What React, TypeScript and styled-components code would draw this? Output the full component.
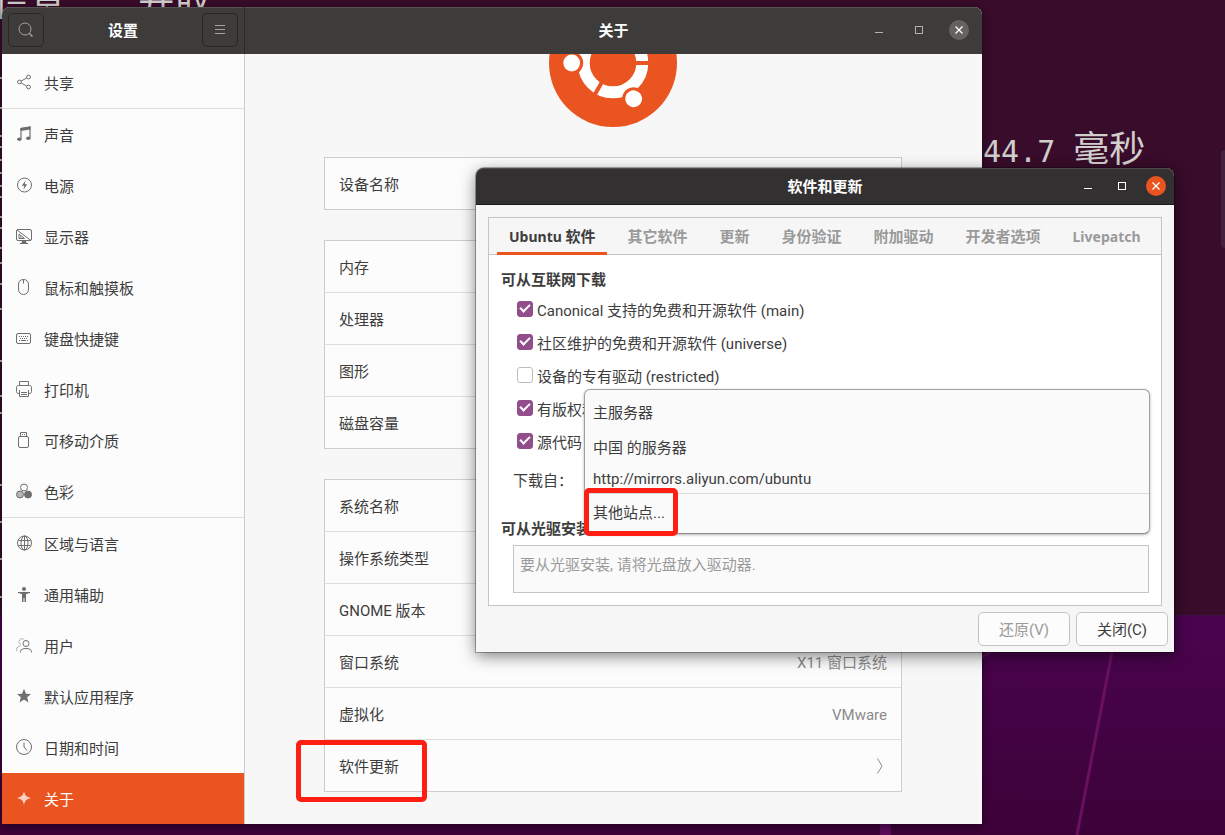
import React from "react";
import styled, { createGlobalStyle, css } from "styled-components";

const GlobalStyle = createGlobalStyle`
  * { box-sizing: border-box; }
  body {
    margin: 0;
    overflow: hidden;
    color: #3d3d3d;
    font: 15px/20px Roboto, "Noto Sans CJK SC", sans-serif;
  }
  button, input, select { font: inherit; color: inherit; }
  h1, h2, p, ul { margin: 0; padding: 0; font-size: inherit; }
`;

const Desktop = styled.main`
  position: relative;
  height: 100vh;
  overflow: hidden;
  background: linear-gradient(#4b0450 73%, #3c0238);
`;
const Rays = styled.svg`
  position: absolute;
  left: 0;
  bottom: 0;
  width: 100%;
  height: 221px;
`;
const Terminal = styled.section`
  position: absolute;
  inset: 0 0 220px;
  overflow: hidden;
  background: #380c2a;
  border-bottom: 1px solid #2b1622;
  color: #d0cfcc;
  font: 30px/36px "DejaVu Sans Mono", "Noto Sans CJK SC", monospace;
`;
const TerminalLine = styled.p<{ $top: number; $left: number }>`
  position: absolute;
  top: ${(p) => p.$top}px;
  left: ${(p) => p.$left}px;
  white-space: pre;
`;
const Wide = styled.span`
  font-size: 36px;
`;
const TerminalScroll = styled.div`
  position: absolute;
  right: 0;
  top: 150px;
  width: 4px;
  height: 98px;
  border-radius: 4px 0 0 4px;
  background: #45203a;
`;

const SettingsWindow = styled.section`
  position: absolute;
  left: 2px;
  right: 243px;
  top: 7px;
  bottom: 11px;
  display: flex;
  flex-direction: column;
  overflow: hidden;
  border-radius: 8px 8px 0 0;
  background: #f7f7f7;
  box-shadow: 0 2px 8px rgba(0, 0, 0, 0.5);
`;
const SettingsHeader = styled.header`
  display: flex;
  flex: none;
  height: 47px;
  background: #3d3c3a;
  box-shadow: inset 0 1px #55534f;
  color: #fff;
`;
const SidebarHeader = styled.div`
  display: flex;
  flex: none;
  align-items: center;
  justify-content: space-between;
  width: 243px;
  padding: 0 6px 1px;
  border-right: 1px solid #2b2a29;
`;
const HeaderButton = styled.button`
  display: grid;
  place-items: center;
  width: 36px;
  height: 34px;
  padding: 0;
  border: 1px solid #282726;
  border-radius: 5px;
  background: transparent;
  color: #a5a3a0;
`;
const PageHeader = styled.div`
  display: grid;
  flex: 1;
  grid-template-columns: 1fr auto 1fr;
  align-items: center;
  padding: 0 13px 1px;
`;
const WindowTitle = styled.h1`
  grid-column: 2;
  && { padding-top: 2px; }
  font-weight: 700;
`;
const WindowControls = styled.div<{ $gap: number }>`
  display: flex;
  justify-content: flex-end;
  gap: ${(p) => p.$gap}px;
`;
const ControlButton = styled.button<{ $fill?: string }>`
  display: grid;
  place-items: center;
  width: 20px;
  height: 20px;
  padding: 0;
  border: 0;
  border-radius: 50%;
  background: ${(p) => p.$fill ?? "transparent"};
`;
const SettingsBody = styled.div`
  display: flex;
  flex: 1;
  min-height: 0;
`;
const Sidebar = styled.nav`
  display: flex;
  flex: none;
  flex-direction: column;
  justify-content: flex-end;
  width: 243px;
  overflow: hidden;
  background: #fcfcfc;
  border-right: 1px solid #cdcdcd;
`;
const NavItem = styled.a<{ $active?: boolean; $divided?: boolean }>`
  display: flex;
  flex: none;
  align-items: center;
  gap: 12px;
  height: ${(p) => (p.$divided ? 52 : 51)}px;
  padding: 2px 14px 0;
  color: #3d3d3d;
  text-decoration: none;
  ${(p) => p.$divided && css`border-bottom: 1px solid #dedede;`}
  ${(p) => p.$active && css`background: #e95420; color: #fff;`}
`;
const NavIcon = styled.svg<{ $active?: boolean }>`
  flex: none;
  width: 16px;
  height: 16px;
  margin-bottom: 3px;
  color: ${(p) => (p.$active ? "#f9cfbf" : "#6e6e6e")};
  fill: none;
  stroke: currentColor;
`;
const Page = styled.div`
  display: flex;
  flex: 1;
  flex-direction: column;
  align-items: center;
  justify-content: flex-end;
  gap: 30px;
  padding: 0 80px 32px 79px;
  overflow: hidden;
`;
const Logo = styled.svg`
  flex: none;
  width: 128px;
  height: 128px;
`;
const Card = styled.ul`
  flex: none;
  width: 100%;
  list-style: none;
  background: #fcfcfc;
  border: 1px solid #cdcdcd;
`;
const CardRow = styled.li`
  display: flex;
  align-items: center;
  justify-content: space-between;
  height: 51px;
  padding: 2px 14px 0;
  & + & {
    height: 52px;
    border-top: 1px solid #dedede;
  }
`;
const CardValue = styled.span`
  color: #8b8b8b;
`;

const Dialog = styled.section`
  position: absolute;
  left: 476px;
  right: 51px;
  top: 168px;
  display: flex;
  flex-direction: column;
  border-radius: 8px 8px 0 0;
  background: #f6f6f6;
  box-shadow: 0 0 0 1px rgba(0, 0, 0, 0.3), 0 4px 16px rgba(0, 0, 0, 0.5);
`;
const DialogHeader = styled.header`
  display: grid;
  grid-template-columns: 1fr auto 1fr;
  align-items: center;
  height: 37px;
  padding: 0 8px;
  border-radius: 8px 8px 0 0;
  border-bottom: 1px solid #1d1c1c;
  background: #323030;
  box-shadow: inset 0 1px #4d4b4a;
  color: #fff;
`;
const Notebook = styled.div`
  margin: 12px 12px 6px;
  border: 1px solid #c4c4c4;
  background: #fff;
`;
const TabBar = styled.div`
  display: flex;
  gap: 8px;
  height: 37px;
  padding: 0 8px;
  border-bottom: 1px solid #c4c4c4;
  background: #f6f6f6;
`;
const Tab = styled.button<{ $active?: boolean }>`
  height: 37px;
  padding: 3px 12px 0;
  border: 0;
  border-bottom: 3px solid ${(p) => (p.$active ? "#e95420" : "transparent")};
  background: transparent;
  color: ${(p) => (p.$active ? "#3d3d3d" : "#9a9a9a")};
  font-weight: 700;
  white-space: nowrap;
`;
const TabLatin = styled.span`
  font-family: "Noto Sans", sans-serif;
  font-size: 14px;
`;
const TabPanel = styled.div`
  padding: 15px 12px 12px;
`;
const SectionTitle = styled.h2`
  font-weight: 700;
`;
const Sources = styled.div`
  display: flex;
  flex-direction: column;
  gap: 13px;
  padding: 10px 16px 0;
`;
const SourceRow = styled.label`
  display: flex;
  align-items: center;
  gap: 4px;
  height: 20px;
  padding-top: 2px;
  white-space: nowrap;
`;
const Tick = styled.input`
  flex: none;
  appearance: none;
  width: 16px;
  height: 16px;
  margin: 0 0 4px;
  border: 1px solid #bdbdbd;
  border-radius: 3px;
  background: #fff;
  &:checked {
    border-color: #924d8b;
    background: #924d8b;
  }
  &:checked::after {
    content: "";
    display: block;
    box-sizing: border-box;
    width: 10px;
    height: 6px;
    margin: 2px;
    border: solid #fff;
    border-width: 0 0 2px 2px;
    transform: rotate(-45deg);
  }
`;
const MirrorRow = styled.div`
  position: relative;
  display: flex;
  align-items: center;
  height: 34px;
  margin: 11px 0 22px 12px;
  padding-top: 2px;
`;
const MirrorMenu = styled.div`
  position: absolute;
  left: 71px;
  right: -1px;
  top: -74px;
  display: flex;
  flex-direction: column;
  padding: 5px 0 1px;
  border: 1px solid #a0a0a0;
  border-bottom-color: #8c8c8c;
  border-radius: 6px;
  background: #fafafa;
  box-shadow: 0 1px 3px rgba(0, 0, 0, 0.3);
`;
const MirrorOption = styled.button<{ $compact?: boolean; $separated?: boolean }>`
  height: ${(p) => (p.$compact ? 28 : 35)}px;
  padding: 0 8px;
  border: 0;
  background: transparent;
  text-align: left;
  ${(p) => p.$separated && css`height: 39px; border-top: 1px solid #dcdcdc;`}
`;
const DiscBox = styled.p`
  && {
    height: 48px;
    margin: 6px 0 0 12px;
    padding: 9px 6px;
  }
  border: 1px solid #c4c4c4;
  background: #fafafa;
  color: #9a9a9a;
`;
const DialogActions = styled.footer`
  display: flex;
  justify-content: flex-end;
  gap: 6px;
  padding: 0 6px 6px;
`;
const ActionButton = styled.button`
  width: 92px;
  height: 34px;
  padding: 2px 0 0;
  border: 1px solid #c4c4c4;
  border-radius: 5px;
  background: #fcfcfc;
  &:disabled { color: #9a9a9a; }
`;
const Highlight = styled.div<{ $x: number; $y: number; $w: number; $h: number }>`
  position: absolute;
  left: ${(p) => p.$x}px;
  top: ${(p) => p.$y}px;
  width: ${(p) => p.$w}px;
  height: ${(p) => p.$h}px;
  border: 5px solid #ff1e12;
  border-radius: 5px;
  pointer-events: none;
`;

const icons: Record<string, React.ReactNode> = {
  share: (
    <>
      <circle cx="3.5" cy="8" r="1.9" /><circle cx="12.5" cy="3" r="1.9" /><circle cx="12.5" cy="13" r="1.9" />
      <path d="M5.2 7l5.5-3M5.2 9l5.5 3" />
    </>
  ),
  music: (
    <>
      <path d="M5 13V2.6L14 1v11" strokeWidth="1.2" />
      <path d="M4.5 2L14.5 .6v3L4.5 5z" fill="currentColor" stroke="none" />
      <ellipse cx="3.3" cy="13.3" rx="2.2" ry="1.8" fill="currentColor" stroke="none" />
      <ellipse cx="12.3" cy="12.3" rx="2.2" ry="1.8" fill="currentColor" stroke="none" />
    </>
  ),
  power: (
    <>
      <circle cx="8.5" cy="8" r="7" />
      <path d="M9.5 3.5L5.8 8.8h2.4L7.5 12.5l3.7-5.3H8.8z" fill="currentColor" stroke="none" />
    </>
  ),
  display: (
    <>
      <rect x=".5" y="1.5" width="15" height="11" rx="1.5" />
      <path d="M1 2l14 10.5M3 6v4.5h5.5zM4.5 8.5v.7h1" />
      <path d="M6 13h4l.5 2H12v1H4v-1h1.5z" fill="currentColor" stroke="none" />
    </>
  ),
  mouse: <path d="M7.5 .5C4 .5 2.5 2.5 2.5 6v4c0 3.3 2 5.5 5 5.5s5-2.2 5-5.5V6c0-3.5-1.5-5.5-5-5.5zM7.5 .5v4" />,
  keyboard: (
    <>
      <rect x=".5" y="3.5" width="14" height="10" rx="1.5" />
      <path d="M3 6.5h10M4 8.5h8" strokeDasharray="1 1" /><path d="M3 10.5h1m1 0h5m1 0h1" />
    </>
  ),
  printer: (
    <>
      <path d="M3.5 4V.5h9V4M3 12.5C1.5 12.5 .5 12 .5 10.5v-4c0-1.3.8-2 2-2h11c1.2 0 2 .7 2 2v4c0 1.5-1 2-2.5 2" />
      <path d="M3.5 9v6.5h9V9M5 11.5h6M5 13.5h6" />
    </>
  ),
  usb: <path d="M4.5 4V.5h6V4M6 2.5h1m1 0h1M4 4.5h7q1.5 0 1.5 1.5v8q0 1.5-1.5 1.5H4q-1.5 0-1.5-1.5V6Q2.5 4.5 4 4.5z" />,
  color: (
    <>
      <circle cx="8" cy="4.5" r="3.5" />
      <circle cx="4" cy="11.5" r="3.5" fill="#b4b4b4" />
      <circle cx="12" cy="11.5" r="3.5" fill="currentColor" />
    </>
  ),
  globe: (
    <>
      <circle cx="8.5" cy="8" r="7" /><ellipse cx="8.5" cy="8" rx="3.5" ry="7" />
      <path d="M2.5 5.5h12M2.5 10.5h12M8.5 1v14" />
    </>
  ),
  access: (
    <>
      <circle cx="8" cy="3" r="2" fill="currentColor" stroke="none" />
      <path d="M2 6h12v1l-4 1v8H8.5v-4h-1v4H6V8L2 7z" fill="currentColor" stroke="none" />
    </>
  ),
  users: (
    <>
      <g opacity=".5"><path d="M5 7.5A3 3 0 1 1 8.5 3M.5 14v-1.5c0-2 1.5-3.5 4-3.5" /></g>
      <circle cx="10" cy="6.5" r="3" /><path d="M4.5 15.5v-.7c0-2.3 2-3.3 5.5-3.3s5.5 1 5.5 3.3v.7" />
    </>
  ),
  star: <path d="M8 .8l2 4.9 5 .3-3.9 3.3 1.4 5.2L8 11.5l-4.5 3 1.4-5.2L1 6l5-.3z" fill="currentColor" stroke="none" />,
  clock: <><circle cx="8" cy="8" r="7.5" /><path d="M8 3.5V8l3 3.5" /></>,
  about: <path d="M8 1c.9 4.500 2.500 6 7 7-4.500 1-6.100 2.500-7 7-.9-4.500-2.500-6-7-7 4.500-1 6.100-2.500 7-7z" fill="currentColor" stroke="none" />,
};

const navItems = [
  { label: "共享", icon: "share", divided: true },
  { label: "声音", icon: "music" },
  { label: "电源", icon: "power" },
  { label: "显示器", icon: "display" },
  { label: "鼠标和触摸板", icon: "mouse" },
  { label: "键盘快捷键", icon: "keyboard" },
  { label: "打印机", icon: "printer" },
  { label: "可移动介质", icon: "usb" },
  { label: "色彩", icon: "color", divided: true },
  { label: "区域与语言", icon: "globe" },
  { label: "通用辅助", icon: "access" },
  { label: "用户", icon: "users" },
  { label: "默认应用程序", icon: "star" },
  { label: "日期和时间", icon: "clock" },
  { label: "关于", icon: "about", active: true },
];

const sources = [
  { label: "Canonical 支持的免费和开源软件 (main)", on: true },
  { label: "社区维护的免费和开源软件 (universe)", on: true },
  { label: "设备的专有驱动 (restricted)", on: false },
  { label: "有版权和", on: true },
  { label: "源代码", on: true },
];

const tabs: { latin?: string; text?: string }[] = [
  { latin: "Ubuntu ", text: "软件" },
  { text: "其它软件" },
  { text: "更新" },
  { text: "身份验证" },
  { text: "附加驱动" },
  { text: "开发者选项" },
  { latin: "Livepatch" },
];

const edgeMarks = [78, 108, 136, 147, 160, 173, 186, 197, 217, 228, 248, 263, 284, 309, 361, 396, 413, 485, 522, 559, 597];

function Controls({ color, fill, gap }: { color: string; fill: string; gap: number }) {
  return (
    <WindowControls $gap={gap}>
      <ControlButton aria-label="最小化">
        <svg width="8" height="8"><path d="M0 6.5h8" stroke={color} /></svg>
      </ControlButton>
      <ControlButton aria-label="最大化">
        <svg width="8" height="8"><rect x=".5" y=".5" width="7" height="7" fill="none" stroke={color} /></svg>
      </ControlButton>
      <ControlButton aria-label="关闭" $fill={fill}>
        <svg width="8" height="8"><path d="M.5 .5l7 7M7.5 .5l-7 7" stroke="#fff" strokeWidth="1.3" /></svg>
      </ControlButton>
    </WindowControls>
  );
}

function UbuntuLogo() {
  const angles = [60, 180, 300];
  return (
    <Logo viewBox="-64 -64 128 128" aria-label="Ubuntu">
      <circle r="64" fill="#e95420" />
      <circle r="29.3" fill="none" stroke="#fff" strokeWidth="12" />
      {angles.map((a) => (
        <g key={a} transform={`rotate(${a})`}>
          <circle cx="41.3" r="11.5" fill="#e95420" />
          <circle cx="41.3" r="8.4" fill="#fff" />
          <path d="M-20 0h-18" stroke="#e95420" strokeWidth="4" />
        </g>
      ))}
    </Logo>
  );
}

export default function App() {
  return (
    <>
      <GlobalStyle />
      <Desktop>
        <Rays viewBox="0 0 1225 221" preserveAspectRatio="xMaxYMax slice" aria-hidden="true">
          <path d="M1112 38L1077 221" stroke="#69105f" strokeWidth="3" />
          <path d="M980 44l14-8" stroke="#69105f" strokeWidth="3" />
          <path d="M880 200h10l1 21h-11z" fill="#5c0a59" />
        </Rays>
        <Terminal>
          <TerminalLine $top={-14} $left={-6}><Wide>信息</Wide>    <Wide>开取</Wide></TerminalLine>
          <TerminalLine $top={132} $left={983}>44.7 <Wide>毫秒</Wide></TerminalLine>
          <svg width="3" height="620" aria-hidden="true">
            {edgeMarks.map((y) => <path key={y} d={`M0 ${y}h2`} stroke="#b9b3b8" strokeWidth="2" />)}
          </svg>
          <TerminalScroll />
        </Terminal>

        <SettingsWindow>
          <SettingsHeader>
            <SidebarHeader>
              <HeaderButton aria-label="搜索">
                <svg width="16" height="16" fill="none" stroke="currentColor"><circle cx="7" cy="7" r="6" /><path d="M11.5 11.5l3 3" strokeWidth="1.5" /></svg>
              </HeaderButton>
              <WindowTitle as="h2">设置</WindowTitle>
              <HeaderButton aria-label="菜单">
                <svg width="10" height="10" stroke="currentColor"><path d="M0 .5h10M0 4.5h10M0 8.5h10" /></svg>
              </HeaderButton>
            </SidebarHeader>
            <PageHeader>
              <WindowTitle>关于</WindowTitle>
              <Controls color="#b3b1ae" fill="#646362" gap={20} />
            </PageHeader>
          </SettingsHeader>
          <SettingsBody>
            <Sidebar>
              {navItems.map((n) => (
                <NavItem key={n.label} href="#" $active={n.active} $divided={n.divided}>
                  <NavIcon viewBox="0 0 16 16" $active={n.active}>{icons[n.icon]}</NavIcon>
                  {n.label}
                </NavItem>
              ))}
            </Sidebar>
            <Page>
              <UbuntuLogo />
              <Card><CardRow>设备名称</CardRow></Card>
              <Card>
                <CardRow>内存</CardRow>
                <CardRow>处理器</CardRow>
                <CardRow>图形</CardRow>
                <CardRow>磁盘容量</CardRow>
              </Card>
              <Card>
                <CardRow>系统名称</CardRow>
                <CardRow>操作系统类型</CardRow>
                <CardRow>GNOME 版本</CardRow>
                <CardRow>窗口系统<CardValue>X11 窗口系统</CardValue></CardRow>
                <CardRow>虚拟化<CardValue>VMware</CardValue></CardRow>
                <CardRow>
                  软件更新
                  <svg width="16" height="18" fill="none" stroke="#8b8b8b"><path d="M6.5 .5L11 8l-4.5 7.5" /></svg>
                </CardRow>
              </Card>
            </Page>
          </SettingsBody>
        </SettingsWindow>

        <Dialog role="dialog" aria-label="软件和更新">
          <DialogHeader>
            <WindowTitle>软件和更新</WindowTitle>
            <Controls color="#fff" fill="#e95420" gap={14} />
          </DialogHeader>
          <Notebook>
            <TabBar role="tablist">
              {tabs.map((t, i) => (
                <Tab key={i} role="tab" aria-selected={i === 0} $active={i === 0}>
                  {t.latin && <TabLatin>{t.latin}</TabLatin>}
                  {t.text}
                </Tab>
              ))}
            </TabBar>
            <TabPanel role="tabpanel">
              <SectionTitle>可从互联网下载</SectionTitle>
              <Sources>
                {sources.map((s) => (
                  <SourceRow key={s.label}>
                    <Tick type="checkbox" defaultChecked={s.on} />
                    {s.label}
                  </SourceRow>
                ))}
              </Sources>
              <MirrorRow>
                <span id="mirror">下载自：</span>
                <MirrorMenu role="listbox" aria-labelledby="mirror">
                  <MirrorOption role="option">主服务器</MirrorOption>
                  <MirrorOption role="option">中国 的服务器</MirrorOption>
                  <MirrorOption role="option" $compact>http://mirrors.aliyun.com/ubuntu</MirrorOption>
                  <MirrorOption role="option" $separated>其他站点...</MirrorOption>
                </MirrorMenu>
              </MirrorRow>
              <SectionTitle>可从光驱安装</SectionTitle>
              <DiscBox>要从光驱安装, 请将光盘放入驱动器.</DiscBox>
            </TabPanel>
          </Notebook>
          <DialogActions>
            <ActionButton disabled>还原(V)</ActionButton>
            <ActionButton>关闭(C)</ActionButton>
          </DialogActions>
        </Dialog>

        <Highlight $x={296} $y={740} $w={131} $h={62} />
        <Highlight $x={584} $y={488} $w={94} $h={48} />
      </Desktop>
    </>
  );
}
